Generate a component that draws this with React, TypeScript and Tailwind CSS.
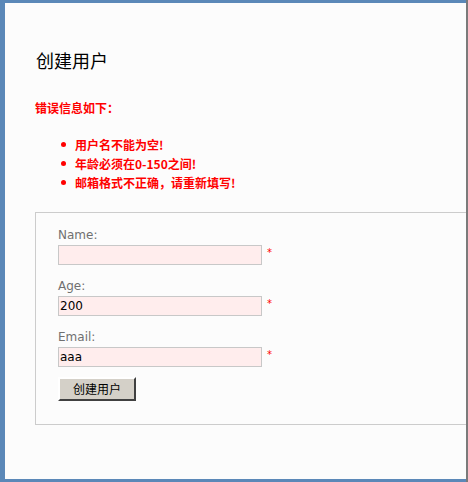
const cjk = "font-['SimSun','Noto_Sans_CJK_SC',sans-serif]";

const errors = ["用户名不能为空!", "年龄必须在0-150之间!", "邮箱格式不正确，请重新填写!"];

function Field({ label, value, first }: { label: string; value: string; first?: boolean }) {
  return (
    <div className={first ? "" : "mt-[13px]"}>
      <div className="font-['DejaVu_Sans',sans-serif] text-[12px] leading-[16px] text-[#707070]">
        {label}
      </div>
      <div className="mt-[2px] flex items-start">
        <div className="flex h-[20px] w-[204px] items-center border border-[#c8c8c8] bg-[#ffeded] px-[1px] font-['DejaVu_Sans',sans-serif] text-[12px] text-black">
          {value}
        </div>
        <span className="ml-[5px] mt-[3px] font-['DejaVu_Sans',sans-serif] text-[10px] leading-[10px] text-[#ff0000]">
          *
        </span>
      </div>
    </div>
  );
}

export default function App() {
  return (
    <div className="flex h-[482px] w-[468px] bg-[#5b88b8]">
      <div className="flex-1 overflow-hidden border-b-[3px] border-l-[5px] border-t-[3px] border-[#5b88b8] bg-[#fcfcfc]">
        <h1 className={`${cjk} ml-[31px] mt-[47px] text-[18px] leading-[20px] text-black`}>创建用户</h1>
        <p className={`${cjk} ml-[30px] mt-[31px] text-[12px] font-bold leading-[14px] text-[#ff0000]`}>
          错误信息如下：
        </p>
        <ul className="ml-[56px] mt-[20px]">
          {errors.map((e) => (
            <li key={e} className={`${cjk} flex items-center text-[12px] font-bold leading-[19px] text-[#ff0000]`}>
              <span className="mr-[9px] h-[5px] w-[5px] rounded-full bg-[#ff0000]" />
              {e}
            </li>
          ))}
        </ul>
        <div className="ml-[30px] mt-[20px] h-[213px] w-[480px] border border-[#cccccc] pl-[22px] pt-[14px]">
          <Field label="Name:" value="" first />
          <Field label="Age:" value="200" />
          <Field label="Email:" value="aaa" />
          <button
            className={`${cjk} mt-[10px] h-[24px] w-[78px] border-2 border-b-[#404040] border-l-white border-r-[#404040] border-t-white bg-[#d4d0c8] text-[12px] text-black`}
          >
            创建用户
          </button>
        </div>
      </div>
      <div className="w-[2px] bg-[#7a7a7a]" />
    </div>
  );
}
